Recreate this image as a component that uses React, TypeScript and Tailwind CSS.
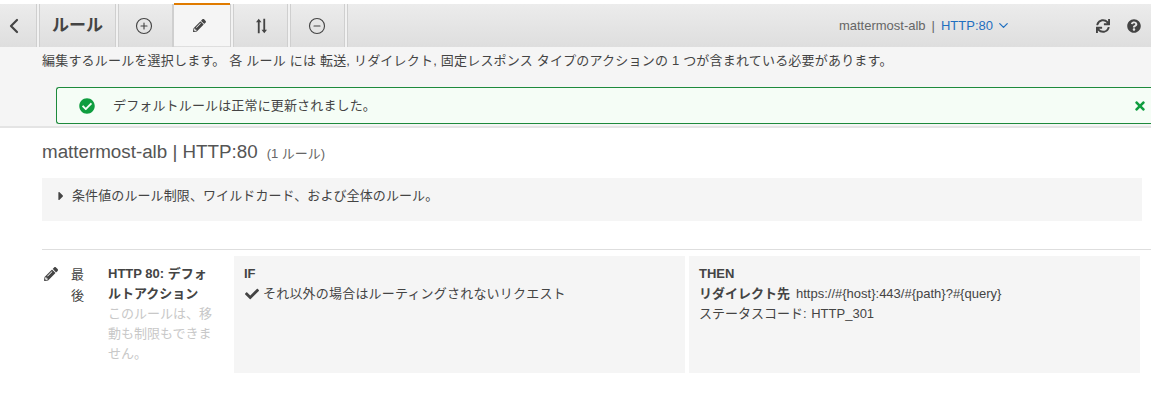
import { ChevronDown, ChevronLeft, CircleMinus, CirclePlus } from "lucide-react";
import { FaCaretRight, FaCheck, FaCheckCircle, FaPencilAlt, FaQuestionCircle, FaSync, FaTimes } from "react-icons/fa";

var font = "font-['Liberation_Sans','Noto_Sans_CJK_JP',sans-serif]";

function Sep() {
  return <div className="w-[4px] h-full bg-[#f2f2f2] border-x border-[#cfcfcf]" />;
}

function SortIcon() {
  return (
    <svg width="11" height="16" viewBox="0 0 12 16" fill="#444">
      <path d="M3 0 L6 4 H4 V16 H2 V4 H0 Z" />
      <path d="M9 16 L12 12 H10 V0 H8 V12 H6 Z" />
    </svg>
  );
}

export default function App() {
  return (
    <div className={"w-[1151px] h-[406px] bg-white overflow-hidden pt-[4px] text-[#444] " + font}>
      {/* toolbar */}
      <div className="h-[43px] flex bg-gradient-to-b from-[#ececec] to-[#dedede]">
        <div className="w-[36px] flex items-center justify-center pr-[8px]">
          <ChevronLeft size={24} strokeWidth={2.2} className="text-[#444]" />
        </div>
        <Sep />
        <div className="w-[75px] flex items-center justify-center text-[17px] font-bold text-[#444]">ルール</div>
        <Sep />
        <div className="w-[53px] flex items-center justify-center pr-[3px]">
          <CirclePlus size={18} strokeWidth={1.5} className="text-[#444]" />
        </div>
        <div className="w-[2px] h-full bg-[#cfcfcf]" />
        <div className="w-[56px] h-[43px] -mt-[1px] flex items-center justify-center pr-[6px] bg-[#f5f5f5] border-t-[2px] border-[#e07b00]">
          <FaPencilAlt size={13} className="text-[#444]" />
        </div>
        <Sep />
        <div className="w-[53px] flex items-center justify-center pl-[2px]">
          <SortIcon />
        </div>
        <Sep />
        <div className="w-[53px] flex items-center justify-center pr-[1px]">
          <CircleMinus size={18} strokeWidth={1.5} className="text-[#444]" />
        </div>
        <Sep />
        <div className="flex-1 flex items-center justify-end pr-[10px]">
          <span className="text-[13px] text-[#666]">mattermost-alb</span>
          <span className="text-[13px] text-[#666] mx-[6px]">|</span>
          <span className="text-[13px] text-[#1f6fc0]">HTTP:80</span>
          <ChevronDown size={15} className="text-[#1f6fc0] ml-[3px] mr-[85px]" />
          <FaSync size={14} className="text-[#444] mr-[17px]" />
          <FaQuestionCircle size={14} className="text-[#444]" />
        </div>
      </div>

      {/* message area */}
      <div className="h-[81px] bg-[#f5f5f5] border-b-[2px] border-[#e4e4e4]">
        <p className="pl-[42px] pt-[5px] text-[13px] leading-[18px] tracking-[0.2px]">
          編集するルールを選択します。 各 ルール には 転送, リダイレクト, 固定レスポンス タイプのアクションの 1 つが含まれている必要があります。
        </p>
        <div className="ml-[56px] mt-[17px] h-[37px] flex items-center bg-[#f5fdf6] border border-[#1d8a3c] rounded-l-[3px] border-r-0">
          <FaCheckCircle size={16} className="text-[#0f9d3f] ml-[22px]" />
          <span className="ml-[18px] text-[13px] tracking-[0.15px]">デフォルトルールは正常に更新されました。</span>
          <FaTimes size={14} className="text-[#0f9d3f] ml-auto mr-[4px]" />
        </div>
      </div>

      {/* content */}
      <div className="pl-[42px] pr-[9px]">
        <div className="mt-[11px] flex items-baseline">
          <span className="text-[18.8px] leading-[26px] text-[#555]">mattermost-alb | HTTP:80</span>
          <span className="ml-[9px] text-[13px] text-[#666]">(1 ルール)</span>
        </div>
        <div className="mt-[13px] h-[43px] bg-[#f5f5f5] flex items-start pl-[12px] pt-[9px] text-[13px] leading-[18px]">
          <FaCaretRight size={14} className="mt-[2px] text-[#444]" />
          <span className="ml-[4px] tracking-[0.1px]">条件値のルール制限、ワイルドカード、および全体のルール。</span>
        </div>
      </div>

      <div className="ml-[42px] mt-[28px] border-t border-[#dedede] pt-[6px] pr-[11px] flex text-[13px] leading-[20px]">
        <div className="w-[29px] pt-[11px] pl-[2px] shrink-0">
          <FaPencilAlt size={14} className="text-[#444]" />
        </div>
        <div className="w-[36px] pt-[8px] shrink-0 leading-[21px]">最<br />後</div>
        <div className="w-[127px] pt-[8px] pl-[1px] pr-[20px] shrink-0 leading-[20px]">
          <div className="font-bold text-[#444]">HTTP 80: デフォルトアクション</div>
          <div className="text-[#c8c8c8]">このルールは、移動も制限もできません。</div>
        </div>
        <div className="w-[451px] h-[117px] bg-[#f5f5f5] pl-[10px] pt-[8px] shrink-0">
          <div className="font-bold">IF</div>
          <div className="flex items-center">
            <FaCheck size={14} className="text-[#444] ml-[1px] mr-[4px]" />
            <span className="tracking-[0.2px]">それ以外の場合はルーティングされないリクエスト</span>
          </div>
        </div>
        <div className="w-[451px] h-[117px] ml-[4px] bg-[#f5f5f5] pl-[10px] pt-[8px] shrink-0">
          <div className="font-bold">THEN</div>
          <div>
            <span className="font-bold">リダイレクト先</span>
            <span className="ml-[6px]">{"https://#{host}:443/#{path}?#{query}"}</span>
          </div>
          <div>
            ステータスコード: <span className="ml-[1px]">HTTP_301</span>
          </div>
        </div>
      </div>
    </div>
  );
}
